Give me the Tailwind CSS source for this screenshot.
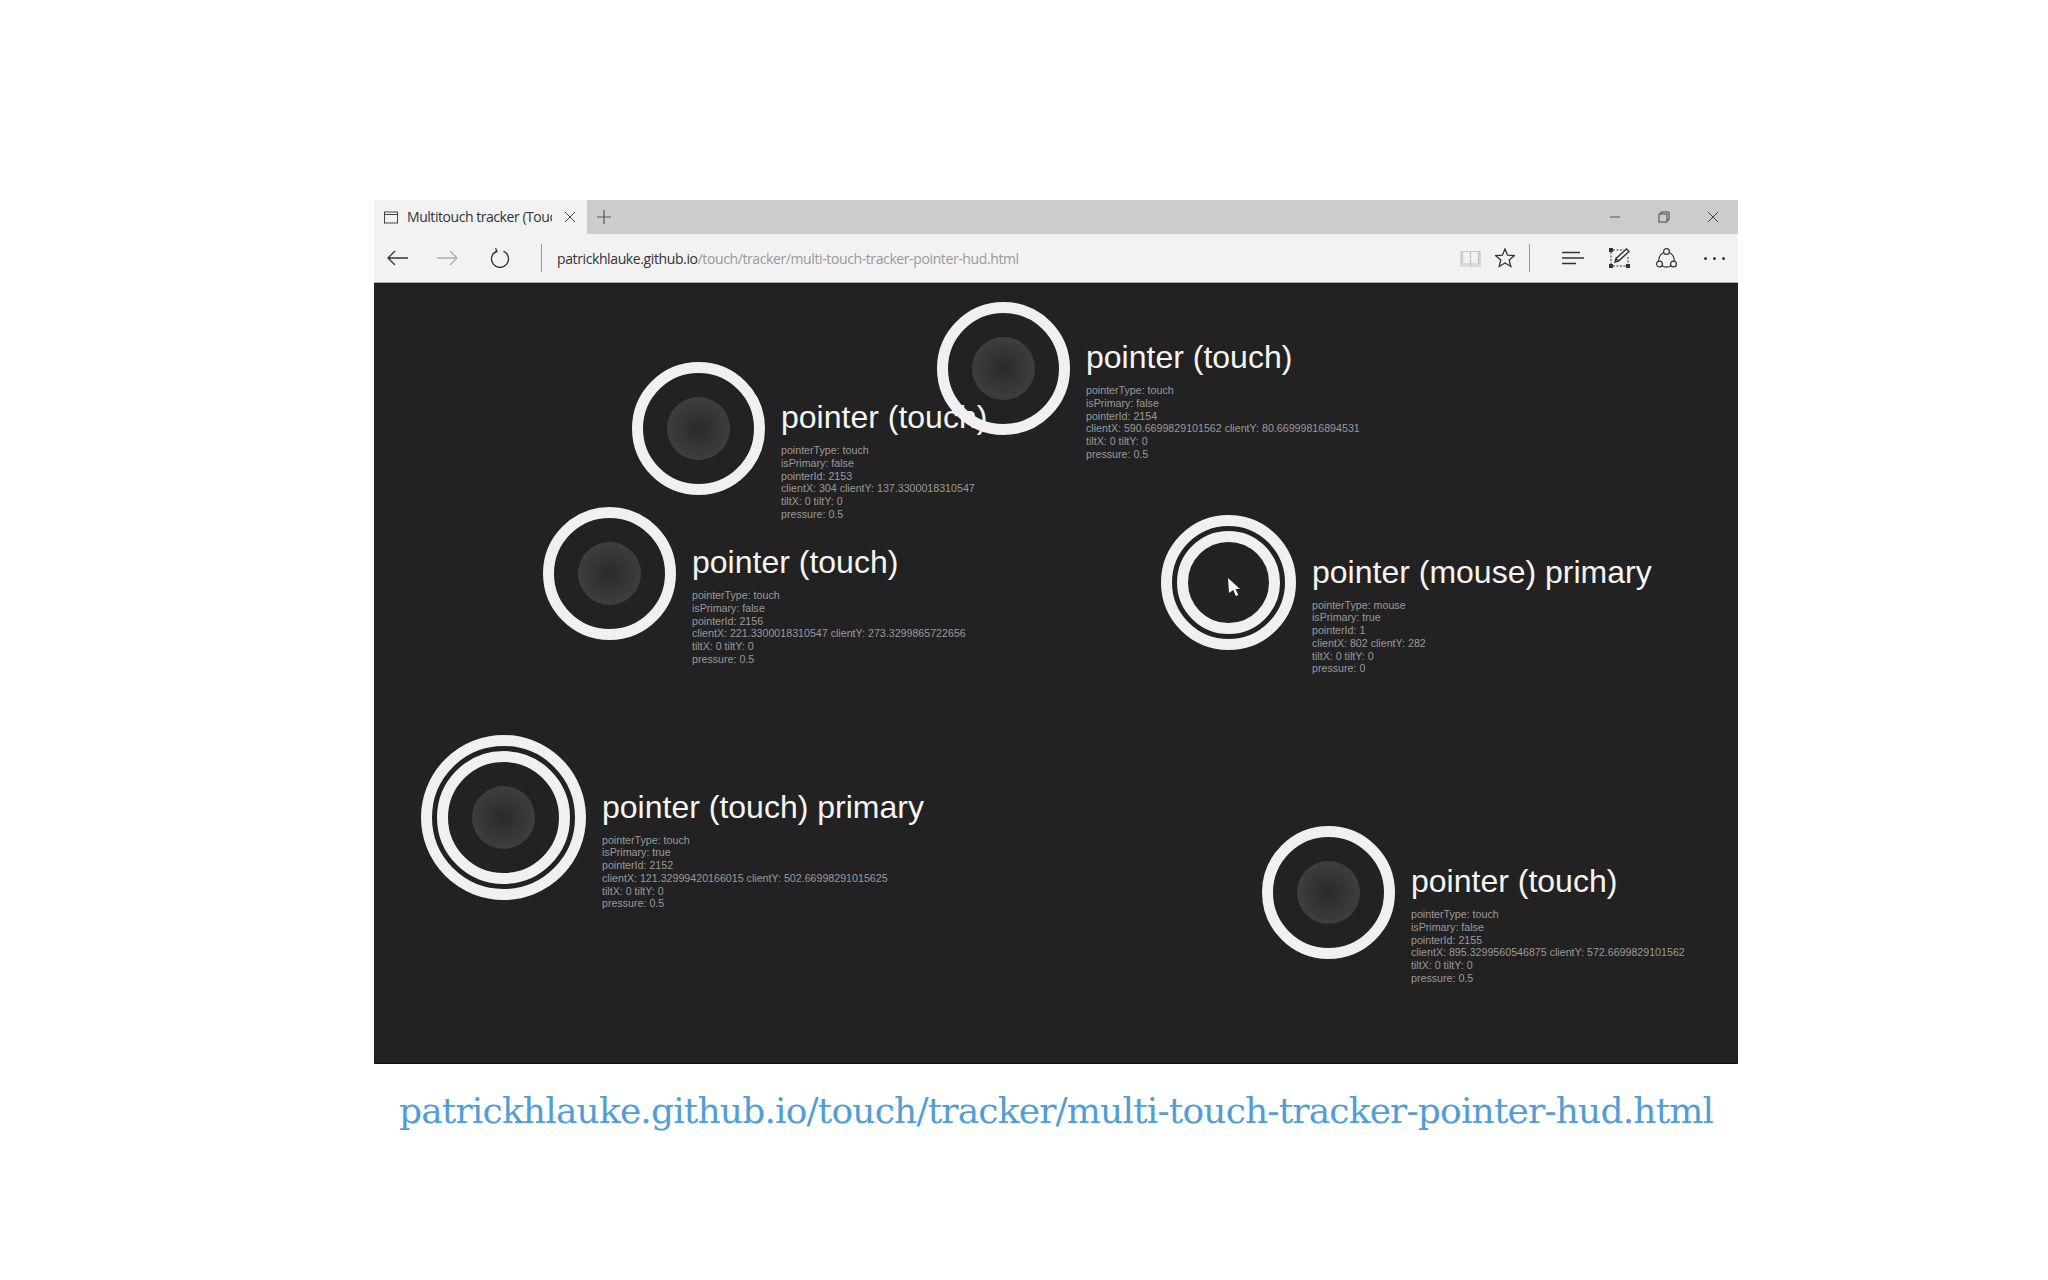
<!DOCTYPE html>
<html>
<head>
<meta charset="utf-8">
<script src="https://cdn.jsdelivr.net/npm/@tailwindcss/browser@4"></script>
</head>
<body class="bg-white font-['Liberation_Sans',sans-serif]">
<div class="w-[2048px] h-[1280px] overflow-hidden pt-[200px] pl-[374px]">
  <div class="w-[1364px] flex flex-col">
    <!-- tab strip -->
    <div class="h-[34px] bg-[#cccccc] flex items-center text-[#333]">
      <div class="w-[213px] h-full bg-[#f2f2f2] flex items-center pl-[9px]">
        <svg class="w-[16px] h-[13px]" viewBox="0 0 16 13" fill="none" stroke="#444" stroke-width="1"><rect x="1.5" y="1" width="13" height="11"/><path d="M1.5 3.5h13"/></svg>
        <div class="ml-[8px] w-[145px] overflow-hidden whitespace-nowrap text-[14px] leading-[34px] tracking-[-0.45px] text-[#333] font-['Open_Sans',sans-serif]">Multitouch tracker (Touch events)</div>
        <svg class="ml-[12px] w-[12px] h-[12px]" viewBox="0 0 12 12" fill="none" stroke="#444" stroke-width="1"><path d="M1 1l10 10M11 1L1 11"/></svg>
      </div>
      <svg class="ml-[10px] w-[14px] h-[14px]" viewBox="0 0 14 14" fill="none" stroke="#555" stroke-width="1.2"><path d="M7 0v14M0 7h14"/></svg>
      <div class="ml-auto flex items-center pr-[19px] gap-[37px]">
        <svg class="w-[12px] h-[12px]" viewBox="0 0 12 12" fill="none" stroke="#555" stroke-width="1"><path d="M1 6h10"/></svg>
        <svg class="w-[12px] h-[12px]" viewBox="0 0 12 12" fill="none" stroke="#444" stroke-width="1"><rect x="1" y="3" width="8" height="8"/><path d="M3 3V1h8v8H9"/></svg>
        <svg class="w-[12px] h-[12px]" viewBox="0 0 12 12" fill="none" stroke="#444" stroke-width="1"><path d="M1 1l10 10M11 1L1 11"/></svg>
      </div>
    </div>
    <!-- toolbar -->
    <div class="h-[49px] bg-[#f2f2f2] border-b border-[#a8a8a8] flex items-center relative">
      <svg class="ml-[13px] w-[21px] h-[16px]" viewBox="0 0 21 16" fill="none" stroke="#333" stroke-width="1.3"><path d="M21 8H1M8 1L1 8l7 7"/></svg>
      <svg class="ml-[29px] w-[21px] h-[16px]" viewBox="0 0 21 16" fill="none" stroke="#aaa" stroke-width="1.3"><path d="M0 8h20M13 1l7 7-7 7"/></svg>
      <svg class="ml-[32px] w-[20px] h-[20px]" viewBox="0 0 20 20" fill="none" stroke="#333" stroke-width="1.3"><path d="M6.5 3.2a8.5 8.5 0 1 0 7 0M5.5 0.3L7 3.5L3.5 5.3"/></svg>
      <div class="ml-[31px] w-px h-[28px] bg-[#999]"></div>
      <div class="ml-[15px] w-[460px] whitespace-nowrap text-[14px] tracking-[-0.39px] font-['Open_Sans',sans-serif] text-[#333]">patrickhlauke.github.io<span class="text-[#999]">/touch/tracker/multi-touch-tracker-pointer-hud.html</span></div>
      <div class="ml-auto flex items-center pr-[13px]">
        <svg class="w-[21px] h-[18px]" viewBox="0 0 21 18" fill="none" stroke="#c4c4c4" stroke-width="1.2"><path d="M1 2.5h8.5a1 1 0 0 1 1 1V17M20 2.5h-8.5a1 1 0 0 0-1 1M2.5 2.5V15h8M18.5 2.5V15h-8M1 2.5V17h19V2.5"/></svg>
        <svg class="ml-[14px] w-[20px] h-[20px]" viewBox="0 0 20 20" fill="none" stroke="#333" stroke-width="1.3"><path d="M10 1l2.6 6.2 6.7.5-5.1 4.3 1.6 6.5L10 15l-5.8 3.5 1.6-6.5L.7 7.7l6.7-.5z"/></svg>
        <div class="ml-[14px] w-px h-[28px] bg-[#999]"></div>
        <svg class="ml-[32px] w-[22px] h-[14px]" viewBox="0 0 22 14" fill="none" stroke="#333" stroke-width="1.3"><path d="M0 1.5h18M0 7h22M0 12.5h14"/></svg>
        <svg class="ml-[25px] w-[21px] h-[20px]" viewBox="0 0 21 20" fill="none"><path d="M4 2h11M2 4v12M4 18h13M19 9v7" stroke="#333" stroke-width="1" stroke-dasharray="2 1.5"/><rect x="0" y="0" width="4" height="4" fill="#333"/><rect x="0" y="16" width="4" height="4" fill="#333"/><rect x="17" y="16" width="4" height="4" fill="#333"/><path d="M6 14l1-3.5L17.5 1l2.5 2.5L9.5 13zM7 10.5l2.5 2.5" stroke="#333" stroke-width="1.4"/></svg>
        <svg class="ml-[26px] w-[21px] h-[21px]" viewBox="0 0 21 21" fill="none" stroke="#333" stroke-width="1.2"><circle cx="10.5" cy="3.5" r="2.9"/><circle cx="3.5" cy="16" r="2.9"/><circle cx="17.5" cy="16" r="2.9"/><path d="M7.8 4.5C4.5 6 2.6 9.5 2.6 13.2M13.2 4.5C16.5 6 18.4 9.5 18.4 13.2M6 17.8c3 1.8 6 1.8 9 0"/></svg>
        <div class="ml-[27px] flex gap-[6px]"><i class="w-[3px] h-[3px] rounded-full bg-[#333]"></i><i class="w-[3px] h-[3px] rounded-full bg-[#333]"></i><i class="w-[3px] h-[3px] rounded-full bg-[#333]"></i></div>
      </div>
    </div>
    <!-- canvas -->
    <div class="h-[781px] bg-[#222222] border-b border-[#111] relative overflow-hidden">

      <!-- 2153 -->
      <div class="absolute left-[257.5px] top-[78.5px] flex items-start whitespace-nowrap">
        <div class="w-[133px] h-[133px] rounded-full border-[11px] border-[#f0f0f0] flex items-center justify-center shrink-0"><div class="w-[63px] h-[63px] rounded-full bg-[radial-gradient(circle,#2a2a2a,#474747)]"></div></div>
        <div class="ml-[16.5px] pt-[37.5px]">
          <div class="text-[32px] leading-[36px] text-[#f5f5f5]">pointer (touch)</div>
          <div class="mt-[9px] text-[10.67px] leading-[12.8px] text-[#9a9a9a]">pointerType: touch<br>isPrimary: false<br>pointerId: 2153<br>clientX: 304 clientY: 137.3300018310547<br>tiltX: 0 tiltY: 0<br>pressure: 0.5</div>
        </div>
      </div>

      <!-- 2154 -->
      <div class="absolute left-[562.5px] top-[18.5px] flex items-start whitespace-nowrap">
        <div class="w-[133px] h-[133px] rounded-full border-[11px] border-[#f0f0f0] flex items-center justify-center shrink-0"><div class="w-[63px] h-[63px] rounded-full bg-[radial-gradient(circle,#2a2a2a,#474747)]"></div></div>
        <div class="ml-[16.5px] pt-[37.5px]">
          <div class="text-[32px] leading-[36px] text-[#f5f5f5]">pointer (touch)</div>
          <div class="mt-[9px] text-[10.67px] leading-[12.8px] text-[#9a9a9a]">pointerType: touch<br>isPrimary: false<br>pointerId: 2154<br>clientX: 590.6699829101562 clientY: 80.66999816894531<br>tiltX: 0 tiltY: 0<br>pressure: 0.5</div>
        </div>
      </div>

      <!-- 2156 -->
      <div class="absolute left-[168.5px] top-[223.5px] flex items-start whitespace-nowrap">
        <div class="w-[133px] h-[133px] rounded-full border-[11px] border-[#f0f0f0] flex items-center justify-center shrink-0"><div class="w-[63px] h-[63px] rounded-full bg-[radial-gradient(circle,#2a2a2a,#474747)]"></div></div>
        <div class="ml-[16.5px] pt-[37.5px]">
          <div class="text-[32px] leading-[36px] text-[#f5f5f5]">pointer (touch)</div>
          <div class="mt-[9px] text-[10.67px] leading-[12.8px] text-[#9a9a9a]">pointerType: touch<br>isPrimary: false<br>pointerId: 2156<br>clientX: 221.3300018310547 clientY: 273.3299865722656<br>tiltX: 0 tiltY: 0<br>pressure: 0.5</div>
        </div>
      </div>

      <!-- mouse -->
      <div class="absolute left-[787px] top-[232px] flex items-start whitespace-nowrap">
        <div class="w-[135px] h-[135px] rounded-full border-[11px] border-[#f0f0f0] flex items-center justify-center shrink-0 relative">
          <div class="w-[103px] h-[103px] rounded-full border-[11px] border-[#f0f0f0] shrink-0"></div>
          <svg class="absolute left-[56px] top-[52px] w-[13px] h-[18px]" viewBox="0 0 13 18"><path d="M0 0l12 11H7.5l2.8 6-2.5 1-2.6-6L1 15z" fill="#f5f5f5"/></svg>
        </div>
        <div class="ml-[16px] pt-[38.5px]">
          <div class="text-[32px] leading-[36px] text-[#f5f5f5]">pointer (mouse) primary</div>
          <div class="mt-[9px] text-[10.67px] leading-[12.8px] text-[#9a9a9a]">pointerType: mouse<br>isPrimary: true<br>pointerId: 1<br>clientX: 802 clientY: 282<br>tiltX: 0 tiltY: 0<br>pressure: 0</div>
        </div>
      </div>

      <!-- 2152 primary -->
      <div class="absolute left-[47px] top-[452px] flex items-start whitespace-nowrap">
        <div class="w-[165px] h-[165px] rounded-full border-[11px] border-[#f0f0f0] flex items-center justify-center shrink-0">
          <div class="w-[133px] h-[133px] rounded-full border-[11px] border-[#f0f0f0] flex items-center justify-center shrink-0"><div class="w-[63px] h-[63px] rounded-full bg-[radial-gradient(circle,#2a2a2a,#474747)]"></div></div>
        </div>
        <div class="ml-[16px] pt-[53.5px]">
          <div class="text-[32px] leading-[36px] text-[#f5f5f5]">pointer (touch) primary</div>
          <div class="mt-[9px] text-[10.67px] leading-[12.8px] text-[#9a9a9a]">pointerType: touch<br>isPrimary: true<br>pointerId: 2152<br>clientX: 121.32999420166015 clientY: 502.66998291015625<br>tiltX: 0 tiltY: 0<br>pressure: 0.5</div>
        </div>
      </div>

      <!-- 2155 -->
      <div class="absolute left-[887.5px] top-[542.5px] flex items-start whitespace-nowrap">
        <div class="w-[133px] h-[133px] rounded-full border-[11px] border-[#f0f0f0] flex items-center justify-center shrink-0"><div class="w-[63px] h-[63px] rounded-full bg-[radial-gradient(circle,#2a2a2a,#474747)]"></div></div>
        <div class="ml-[16.5px] pt-[37.5px]">
          <div class="text-[32px] leading-[36px] text-[#f5f5f5]">pointer (touch)</div>
          <div class="mt-[9px] text-[10.67px] leading-[12.8px] text-[#9a9a9a]">pointerType: touch<br>isPrimary: false<br>pointerId: 2155<br>clientX: 895.3299560546875 clientY: 572.6699829101562<br>tiltX: 0 tiltY: 0<br>pressure: 0.5</div>
        </div>
      </div>
    </div>
    <!-- caption -->
    <div class="mt-[23px] ml-[25px] whitespace-nowrap text-[36px] leading-[48px] text-[#529dd6] font-['DejaVu_Serif',serif] tracking-[-0.83px]">patrickhlauke.github.io/touch/tracker/multi-touch-tracker-pointer-hud.html</div>
  </div>
</div>
</body>
</html>
